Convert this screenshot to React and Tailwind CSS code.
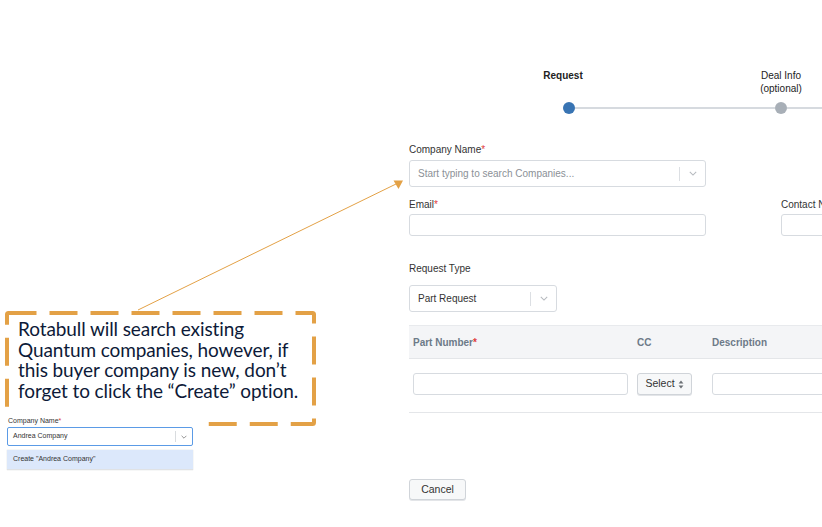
import React from "react"

function Chevron({ className }) {
  return (
    <svg viewBox="0 0 10 6" className={className} fill="none" stroke="currentColor" strokeWidth="1.3">
      <path d="M1 1l4 4 4-4" />
    </svg>
  )
}

function SelectBox({ width, height, text, muted }) {
  return (
    <div className={`flex items-center ${width} ${height} border border-[#d7dbe0] rounded-[3px] bg-white`}>
      <span className={`flex-1 pl-2 text-[10px] ${muted ? "text-[#8b9096]" : "text-[#333]"}`}>{text}</span>
      <span className="w-px h-[14px] bg-[#dcdfe3]" />
      <span className="w-[25px] flex justify-center text-[#b5b9be]">
        <Chevron className="w-[8px] h-[5px]" />
      </span>
    </div>
  )
}

function Label({ children, required, className = "" }) {
  return (
    <div className={`text-[10px] leading-[12px] text-[#333] ${className}`}>
      {children}
      {required && <span className="text-[#e03b3b]">*</span>}
    </div>
  )
}

function Form() {
  return (
    <div className="w-[700px] pt-[69px]">
      {/* stepper */}
      <div className="flex items-start text-[10px] leading-[13px] text-[#222]">
        <div className="w-[120px] shrink-0 ml-[100px] text-center font-bold pr-3">Request</div>
        <div className="w-[120px] shrink-0 ml-[92px] text-center">
          Deal Info
          <br />
          (optional)
        </div>
      </div>
      <div className="flex items-center mt-[7px]">
        <div className="shrink-0 ml-[154px] w-3 h-3 rounded-full bg-[#3874b3]" />
        <div className="shrink-0 w-[200px] h-[1.5px] bg-[#d6dadf]" />
        <div className="shrink-0 w-3 h-3 rounded-full bg-[#a8afb7]" />
        <div className="shrink-0 w-[300px] h-[1.5px] bg-[#d6dadf]" />
      </div>

      <Label required className="mt-[30px]">Company Name</Label>
      <div className="mt-1">
        <SelectBox width="w-[297px]" height="h-[27px]" text="Start typing to search Companies..." muted />
      </div>

      <div className="flex mt-[12px]">
        <div className="w-[297px] shrink-0">
          <Label required>Email</Label>
          <div className="mt-[3px] h-[22px] border border-[#d7dbe0] rounded-[3px]" />
        </div>
        <div className="ml-[75px] w-[200px] shrink-0">
          <Label>Contact Name</Label>
          <div className="mt-[3px] h-[22px] border border-[#d7dbe0] rounded-[3px]" />
        </div>
      </div>

      <Label className="mt-[27px]">Request Type</Label>
      <div className="mt-[10px]">
        <SelectBox width="w-[148px]" height="h-[27px]" text="Part Request" />
      </div>

      {/* parts table */}
      <div className="mt-[13px] border-t border-[#e8eaed]">
        <div className="flex items-center h-[33px] bg-[#f4f5f7] border-b border-[#e4e6e9] text-[10px] font-bold text-[#6d7a88]">
          <div className="w-[228px] shrink-0 pl-1">
            Part Number<span className="text-[#e03b3b]">*</span>
          </div>
          <div className="w-[75px] shrink-0">CC</div>
          <div>Description</div>
        </div>
        <div className="flex items-center pt-[14px] pb-[17px] border-b border-[#e4e6e9]">
          <div className="w-[228px] shrink-0 pl-1">
            <div className="w-[215px] h-[22px] border border-[#d7dbe0] rounded-[3px]" />
          </div>
          <div className="w-[75px] shrink-0">
            <div className="w-[55px] h-[22px] border border-[#d0d4d9] rounded-[3px] bg-[#f7f8f9] shadow-[0_1px_0_#e3e5e8] flex items-center justify-center gap-[3px] text-[10.5px] text-[#333]">
              Select
              <svg viewBox="0 0 6 10" className="w-[6px] h-[9px]" fill="#6b6f74">
                <path d="M3 0.5L5.7 4H0.3z" />
                <path d="M3 9.5L5.7 6H0.3z" />
              </svg>
            </div>
          </div>
          <div className="w-[220px] shrink-0 h-[22px] border border-[#d7dbe0] rounded-[3px]" />
        </div>
      </div>

      <button className="mt-[66px] w-[57px] h-[21px] border border-[#d0d4d9] rounded-[3px] bg-[#f7f8f9] shadow-[0_1px_0_#e3e5e8] text-[10.5px] text-[#333]">
        Cancel
      </button>
    </div>
  )
}

export default function App() {
  return (
    <div className="relative w-[822px] h-[527px] overflow-hidden bg-white flex font-['Liberation_Sans',Arial,sans-serif]">
      <div className="relative w-[409px] shrink-0">
        {/* callout */}
        <div className="absolute left-[5px] top-[311px] w-[311px] h-[115px] pl-[13px] pt-[8px]">
          <svg className="absolute inset-0 w-full h-full" viewBox="0 0 311 115" fill="none">
            <rect x="2" y="2" width="307" height="111" rx="1.5" stroke="#e3a146" strokeWidth="4" strokeDasharray="28 13" />
          </svg>
          <p className="relative font-['Lato',sans-serif] text-[19px] leading-[20.5px] text-[#0d1a38] tracking-[-0.1px]">
            Rotabull will search existing Quantum companies, however, if this buyer company is new, don’t forget to click the “Create” option.
          </p>
        </div>

        {/* inset screenshot */}
        <div className="absolute left-0 top-[410px] w-[200px] h-[64px] bg-white pl-[7px] pt-[6px]">
          <div className="text-[7px] leading-[9px] text-[#333] pl-[1px]">
            Company Name<span className="text-[#e03b3b]">*</span>
          </div>
          <div className="mt-[2px] w-[186px] h-[19px] border border-[#5b9be6] rounded-[2px] flex items-center">
            <span className="flex-1 pl-[5px] text-[7px] text-[#333]">Andrea Company</span>
            <span className="w-px h-[11px] bg-[#d9dcdf]" />
            <span className="w-[16px] flex justify-center text-[#777]">
              <Chevron className="w-[6px] h-[4px]" />
            </span>
          </div>
          <div className="mt-[4px] w-[186px] h-[20px] bg-[#dce8fb] border-b border-[#e0e2e5] flex items-center pl-[6px] text-[7px] text-[#333] shadow-[0_0_1px_#c8ccd1]">
            Create "Andrea Company"
          </div>
        </div>
      </div>

      <div className="flex-1 overflow-hidden">
        <Form />
      </div>

      {/* arrow */}
      <svg className="absolute inset-0 w-[822px] h-[527px] pointer-events-none" viewBox="0 0 822 527">
        <line x1="138" y1="310" x2="396" y2="184" stroke="#e3a146" strokeWidth="1" />
        <path d="M403 180.5L393.5 180.5L398.5 189z" fill="#e3a146" />
      </svg>
    </div>
  )
}
